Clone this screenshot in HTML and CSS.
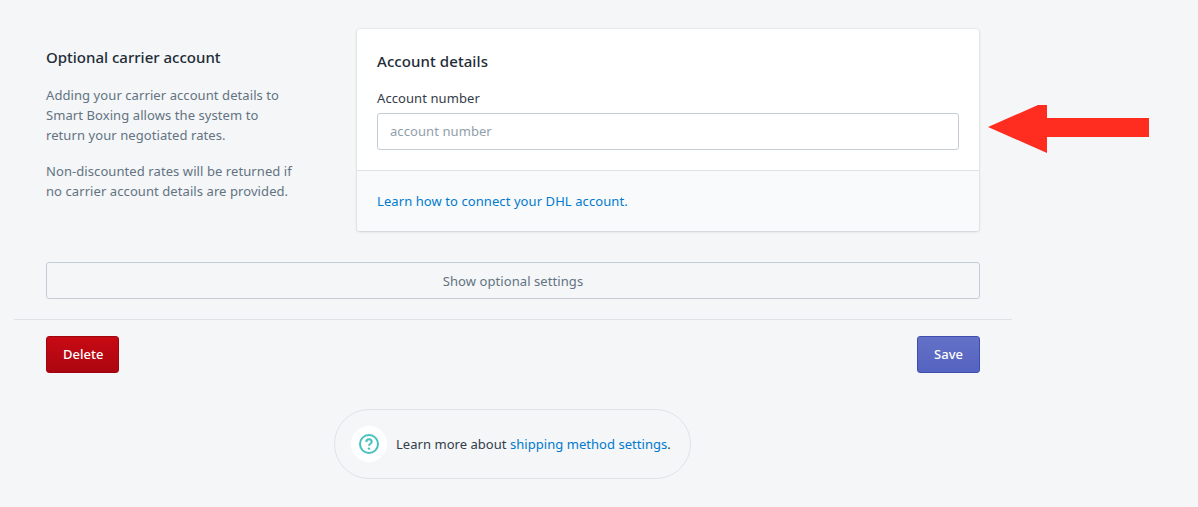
FILE: index.html
```html
<!DOCTYPE html>
<html lang="en">
<head>
<meta charset="utf-8">
<title>Optional carrier account</title>
<link rel="stylesheet" href="styles.css">
</head>
<body>
<main class="page">
  <section class="layout">
    <div class="annotation">
      <h2 class="annotation-title">Optional carrier account</h2>
      <p class="annotation-text">Adding your carrier account details to Smart Boxing allows the system to return your negotiated rates.</p>
      <p class="annotation-text">Non-discounted rates will be returned if no carrier account details are provided.</p>
    </div>
    <div class="card">
      <div class="card-body">
        <h3 class="card-title">Account details</h3>
        <label class="field-label" for="acct">Account number</label>
        <input class="field-input" id="acct" type="text" placeholder="account number">
      </div>
      <div class="card-footer">
        <a class="link" href="#">Learn how to connect your DHL account.</a>
      </div>
    </div>
    <svg class="arrow" width="161" height="48" viewBox="0 0 161 48" aria-hidden="true">
      <path d="M0 22 L50 0 H59 V13 H161 V32 H59 V48 Z" fill="#ff2d20"/>
    </svg>
  </section>
  <div class="toggle-row">
    <button class="btn-toggle" type="button">Show optional settings</button>
  </div>
  <div class="actions">
    <button class="btn btn-delete" type="button">Delete</button>
    <button class="btn btn-save" type="button">Save</button>
  </div>
  <div class="help-row">
    <div class="help">
      <span class="help-icon">
        <svg width="20" height="20" viewBox="0 0 20 20" aria-hidden="true">
          <circle cx="10" cy="10" r="9" fill="none" stroke="#47c1bf" stroke-width="2"/>
          <path d="M7.3 8a2.7 2.7 0 0 1 5.4 0c0 1.7-2.7 1.9-2.7 3.7" fill="none" stroke="#47c1bf" stroke-width="2"/>
          <circle cx="10" cy="14.6" r="1.2" fill="#47c1bf"/>
        </svg>
      </span>
      <span class="help-text">Learn more about <a class="link" href="#">shipping method settings</a>.</span>
    </div>
  </div>
</main>
</body>
</html>
```
FILE: styles.css
```css
* { box-sizing: border-box; }
html, body { margin: 0; padding: 0; }
body {
  background: #f4f6f8;
  color: #333c48;
  font-family: "Noto Sans", "Open Sans", sans-serif;
  font-size: 13px;
  line-height: 20px;
  letter-spacing: .08px;
  height: 507px;
  overflow: hidden;
}
.page { margin-left: 14px; width: 998px; }
.layout { position: relative; display: flex; padding: 29px 32px 0; }
.annotation { width: 311px; flex: none; padding-top: 18px; }
.annotation-title { margin: 0 0 18px; font-size: 15px; line-height: 20px; font-weight: 500; color: #212b36; letter-spacing: 0; }
.annotation-text { margin: 0 0 16px; width: 250px; color: #637381; }
.card {
  width: 622px;
  height: 202px;
  background: #fff;
  border-radius: 3px;
  box-shadow: 0 0 0 1px rgba(63,63,68,.05), 0 1px 3px rgba(63,63,68,.15);
  display: flex;
  flex-direction: column;
}
.card-body { padding: 22px 20px 20px; height: 141px; }
.card-title { margin: 0 0 17px; font-size: 15px; line-height: 20px; font-weight: 500; color: #212b36; }
.field-label { display: block; margin-bottom: 5px; line-height: 20px; }
.field-input {
  display: block;
  width: 100%;
  height: 37px;
  padding: 0 12px 2px;
  background: #fff;
  border: 1px solid #c4cdd5;
  border-radius: 3px;
  font: inherit;
  letter-spacing: inherit;
  color: #212b36;
  outline: none;
}
.field-input::placeholder { color: #919eab; opacity: 1; }
.card-footer {
  flex: 1;
  padding: 20px;
  background: #f9fafb;
  border-top: 1px solid #dfe3e8;
  border-radius: 0 0 3px 3px;
}
.link { color: #007ace; text-decoration: none; }
.arrow { position: absolute; left: 974px; top: 105px; }
.toggle-row { padding: 31px 32px 20px; border-bottom: 1px solid #dfe3e8; }
.btn-toggle {
  display: block;
  width: 100%;
  height: 37px;
  background: transparent;
  border: 1px solid #c4cdd5;
  border-radius: 3px;
  font: inherit;
  letter-spacing: inherit;
  color: #637381;
}
.actions { display: flex; justify-content: space-between; padding: 16px 32px 0; }
.btn {
  height: 37px;
  border-radius: 3px;
  font: inherit;
  font-weight: 500;
  color: #fff;
  padding: 0 16px 2px;
}
.btn-delete {
  width: 73px;
  background: linear-gradient(to bottom, #c70a14, #ab0610);
  border: 1px solid #a00610;
}
.btn-save {
  width: 63px;
  background: linear-gradient(to bottom, #6371c7, #5563c1);
  border: 1px solid #3f4eae;
}
.help-row { display: flex; padding: 36px 0 0 320px; }
.help {
  display: flex;
  align-items: center;
  width: 357px;
  height: 70px;
  padding: 0 16px;
  border: 1px solid #dfe3e8;
  border-radius: 35px;
}
.help-icon {
  width: 36px;
  height: 36px;
  flex: none;
  border-radius: 50%;
  background: #fff;
  display: flex;
  align-items: center;
  justify-content: center;
  margin-right: 9px;
}
.help-icon svg { display: block; }
.help-text { white-space: nowrap; letter-spacing: .04px; }
```
